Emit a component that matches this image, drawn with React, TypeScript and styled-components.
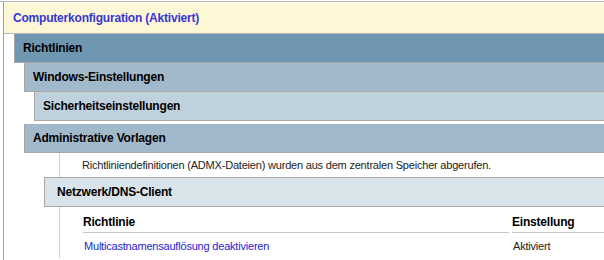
import React from 'react';
import styled, { createGlobalStyle } from 'styled-components';

const GlobalStyle = createGlobalStyle`
  html, body {
    margin: 0;
    padding: 0;
    background: #ffffff;
    overflow: hidden;
  }
  body {
    font-family: "Liberation Sans", Arial, sans-serif;
    font-size: 11px;
    color: #1a1a1a;
  }
  * {
    box-sizing: border-box;
  }
`;

const Page = styled.div`
  width: 604px;
  height: 260px;
  overflow: hidden;
  padding-top: 1px;
`;

const TopRule = styled.div`
  height: 1px;
  background: #b4b4b4;
`;

const Frame = styled.div`
  margin-left: 3px;
  border-left: 1px solid #a0a0a0;
  padding-top: 1px;
  height: 100%;
`;

const SectionHeader = styled.div`
  height: 31px;
  display: flex;
  align-items: center;
  padding-left: 9px;
  background: #fef7d6;
  border-bottom: 1px solid #b8b8b8;
  color: #3535d6;
  font-size: 12px;
  font-weight: bold;
  letter-spacing: -0.2px;
`;

const Indent = styled.div<{ $left: number }>`
  padding-left: ${p => p.$left}px;
`;

const Band = styled.div<{ $bg: string; $gap?: number }>`
  height: 29px;
  display: flex;
  align-items: center;
  padding-left: 8px;
  background: ${p => p.$bg};
  border-left: 1px solid #a8a8a8;
  border-bottom: 1px solid #a8a8a8;
  margin-bottom: ${p => p.$gap || 0}px;
  font-size: 12px;
  font-weight: bold;
  color: #000;
  letter-spacing: -0.2px;
`;

const SubBand = styled(Band)`
  height: 30px;
  border-top: 1px solid #a8a8a8;
  padding-left: 12px;
`;

const Lined = styled.div`
  margin-left: 15px;
  border-left: 1px solid #cfcfcf;
`;

const InfoRow = styled.div`
  height: 24px;
  display: flex;
  align-items: center;
  padding-left: 22px;
  color: #222;
  letter-spacing: -0.2px;
`;

const PolicyTable = styled.div`
  padding: 5px 0 0 23px;
  display: grid;
  grid-template-columns: 426px 1fr;
  column-gap: 3px;
`;

const HeadCell = styled.div`
  height: 21px;
  display: flex;
  align-items: center;
  font-size: 12px;
  font-weight: bold;
  color: #000;
  border-bottom: 1px solid #c8c8c8;
  letter-spacing: -0.2px;
`;

const Cell = styled.div<{ $link?: boolean }>`
  height: 25px;
  display: flex;
  align-items: center;
  padding-left: 1px;
  color: ${p => (p.$link ? '#2323d8' : '#222')};
  letter-spacing: -0.2px;
`;

export default function App() {
  return (
    <Page>
      <GlobalStyle />
      <TopRule />
      <Frame>
        <SectionHeader>Computerkonfiguration (Aktiviert)</SectionHeader>
        <Indent $left={10}>
          <Band $bg="#7097b1">Richtlinien</Band>
          <Indent $left={10}>
            <Band $bg="#a2b8cb">Windows-Einstellungen</Band>
            <Indent $left={10}>
              <Band $bg="#bfd1dc" $gap={3}>Sicherheitseinstellungen</Band>
            </Indent>
            <Band $bg="#a2b8cb">Administrative Vorlagen</Band>
            <Indent $left={20}>
              <Lined>
                <InfoRow>
                  Richtliniendefinitionen (ADMX-Dateien) wurden aus dem zentralen Speicher abgerufen.
                </InfoRow>
              </Lined>
              <SubBand $bg="#d9e3ea">Netzwerk/DNS-Client</SubBand>
              <Lined>
                <PolicyTable>
                  <HeadCell>Richtlinie</HeadCell>
                  <HeadCell>Einstellung</HeadCell>
                  <Cell $link>Multicastnamensauflösung deaktivieren</Cell>
                  <Cell>Aktiviert</Cell>
                </PolicyTable>
              </Lined>
            </Indent>
          </Indent>
        </Indent>
      </Frame>
    </Page>
  );
}
